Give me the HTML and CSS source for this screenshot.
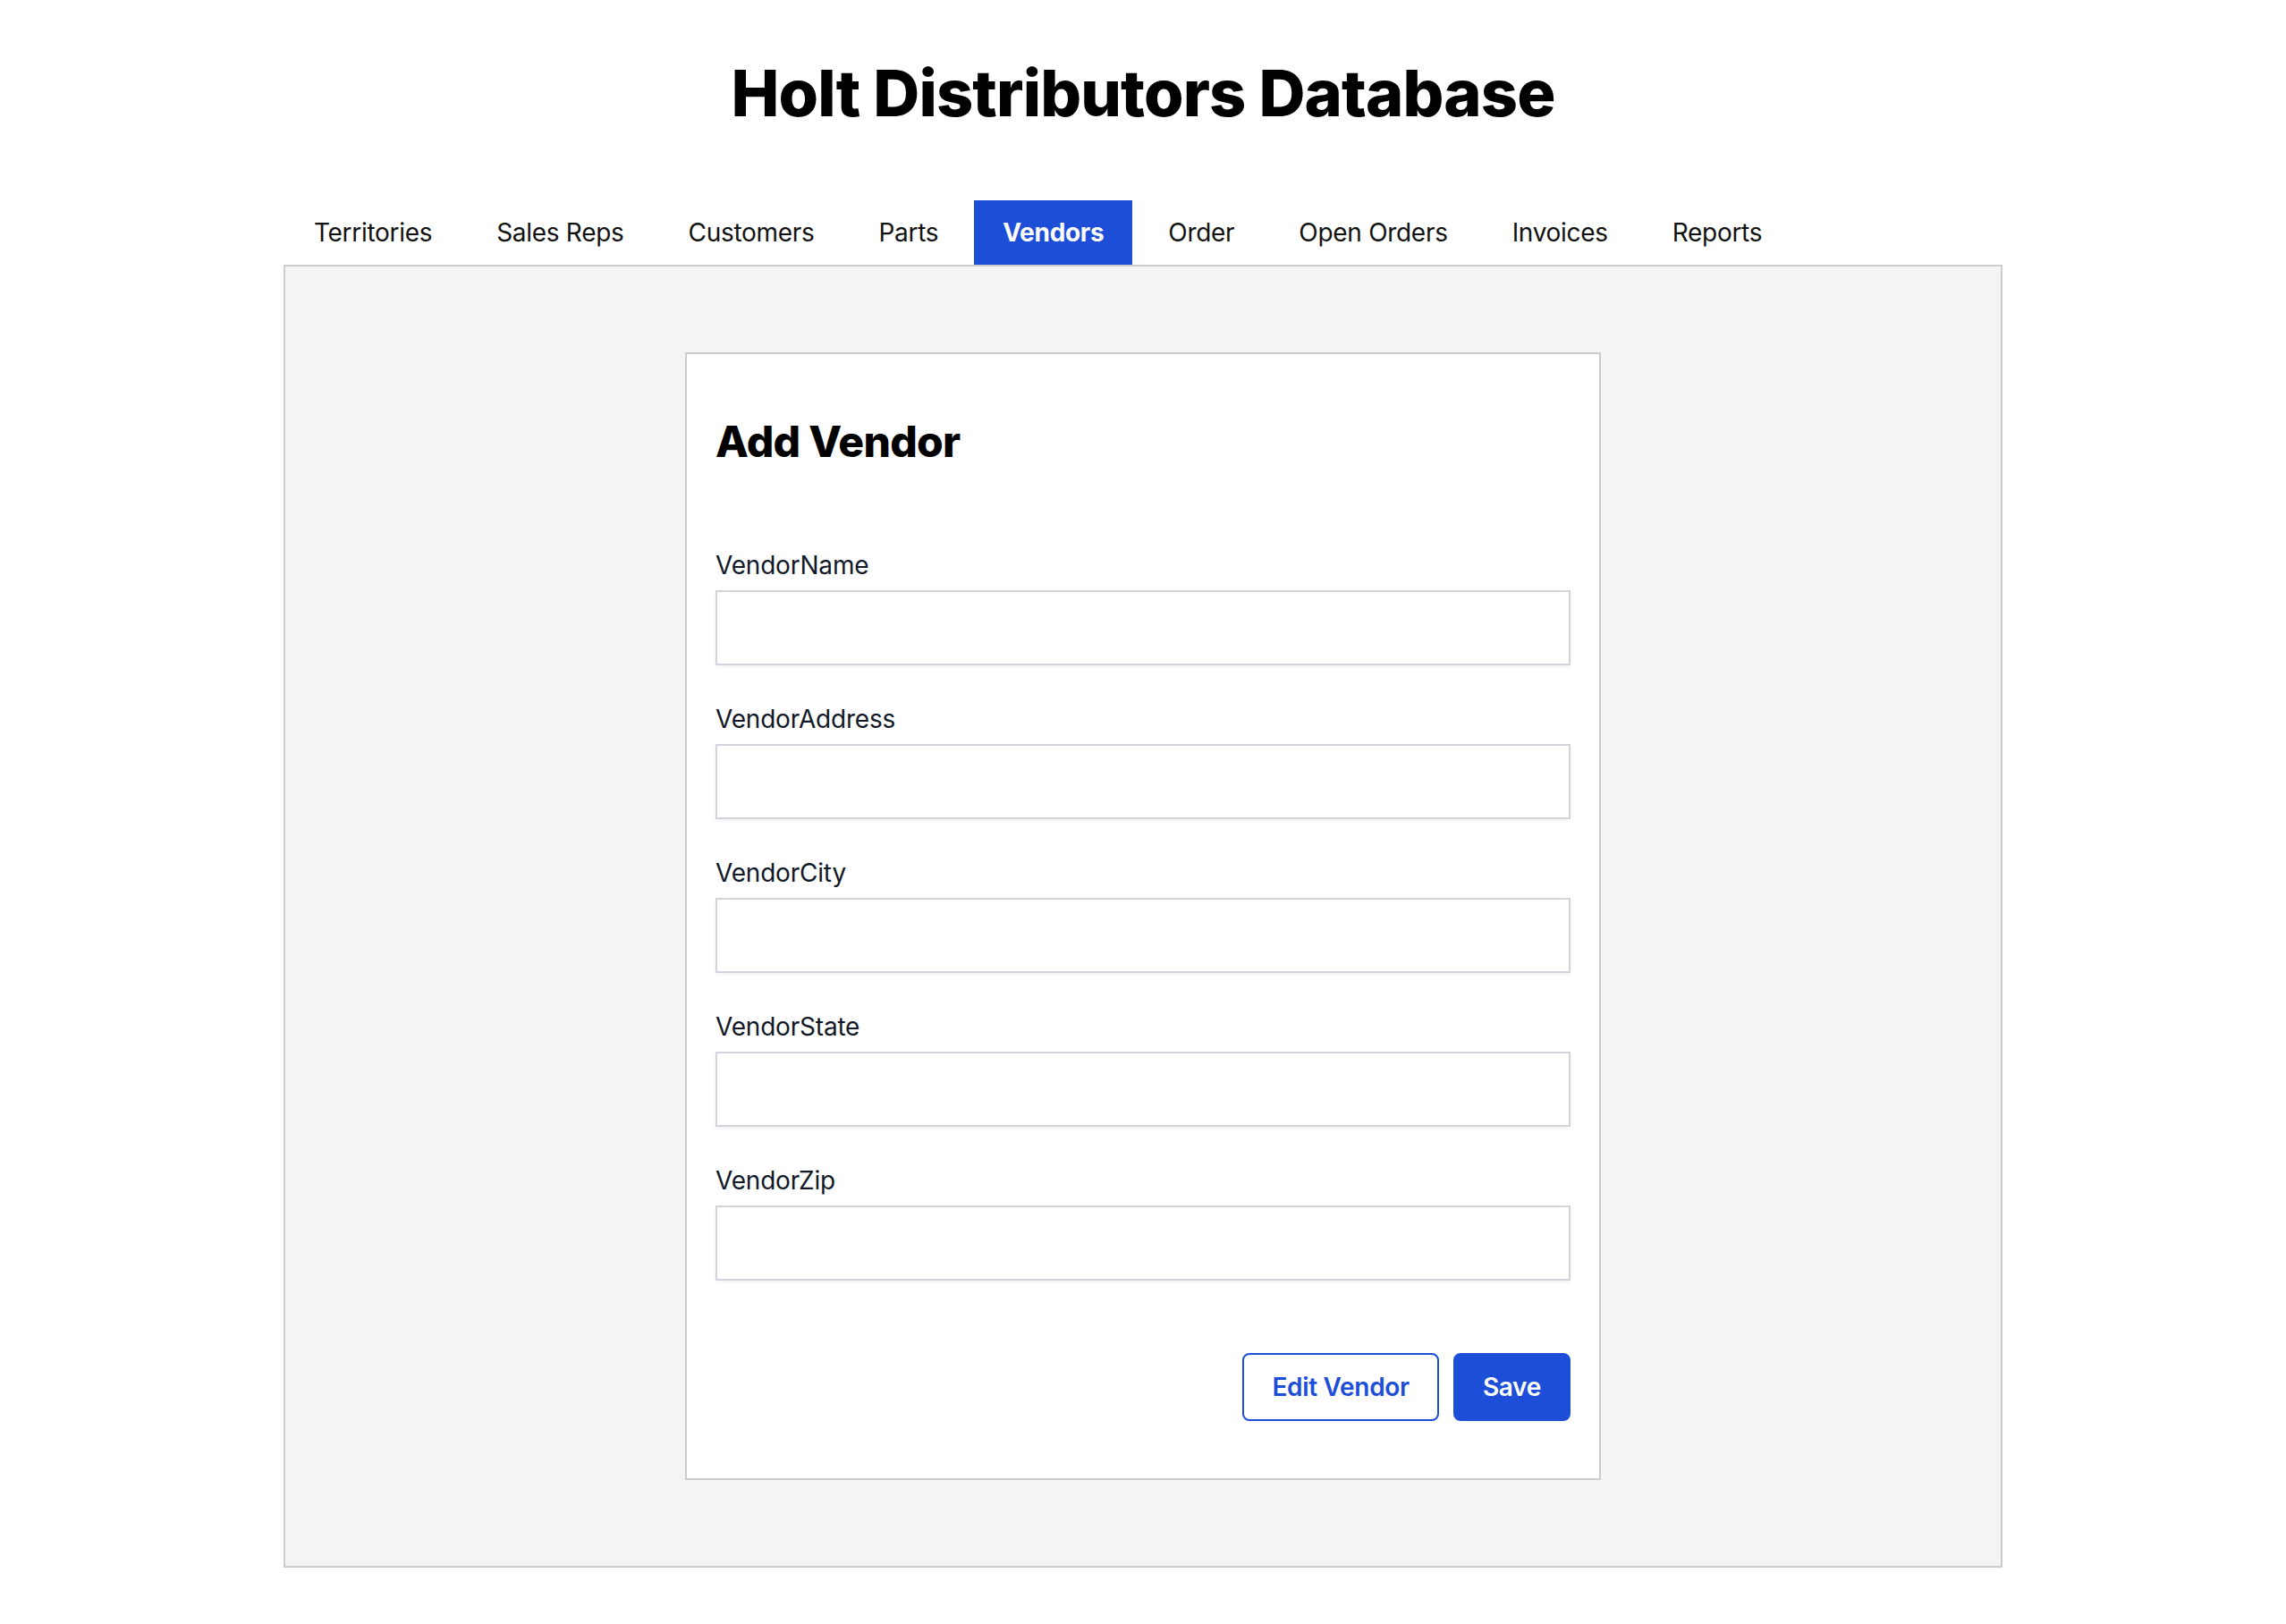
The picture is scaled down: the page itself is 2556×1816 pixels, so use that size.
FILE: index.html
```html
<!DOCTYPE html>
<html lang="en">
<head>
<meta charset="utf-8">
<title>Holt Distributors Database</title>
<link rel="stylesheet" href="styles.css">
</head>
<body>
  <h1 class="title">Holt Distributors Database</h1>
  <div class="wrap">
    <nav class="tabs">
      <a class="tab">Territories</a>
      <a class="tab">Sales Reps</a>
      <a class="tab">Customers</a>
      <a class="tab">Parts</a>
      <a class="tab active">Vendors</a>
      <a class="tab">Order</a>
      <a class="tab">Open Orders</a>
      <a class="tab">Invoices</a>
      <a class="tab">Reports</a>
    </nav>
    <main class="panel">
      <form class="card">
        <h2 class="card-title">Add Vendor</h2>
        <div class="field">
          <label class="label">VendorName</label>
          <input class="input" type="text">
        </div>
        <div class="field">
          <label class="label">VendorAddress</label>
          <input class="input" type="text">
        </div>
        <div class="field">
          <label class="label">VendorCity</label>
          <input class="input" type="text">
        </div>
        <div class="field">
          <label class="label">VendorState</label>
          <input class="input" type="text">
        </div>
        <div class="field">
          <label class="label">VendorZip</label>
          <input class="input" type="text">
        </div>
        <div class="actions">
          <button type="button" class="btn btn-outline">Edit Vendor</button>
          <button type="button" class="btn btn-primary">Save</button>
        </div>
      </form>
    </main>
  </div>
</body>
</html>
```

FILE: styles.css
```css
* { box-sizing: border-box; }
html, body { margin: 0; padding: 0; background: #ffffff; }
body {
  font-family: Inter, "Liberation Sans", Arial, sans-serif;
  color: #000;
}
.title {
  margin: 64px 0 64px;
  text-align: center;
  font-size: 72px;
  line-height: 80px;
  font-weight: 800;
  letter-spacing: -0.012em;
  color: #000;
}
.wrap {
  width: 1922px;
  margin: 0 auto;
  padding-top: 16px;
}
.tabs {
  display: flex;
  gap: 8px;
  padding-left: 2px;
}
.tab {
  display: block;
  padding: 16px 32px;
  font-size: 28px;
  line-height: 40px;
  letter-spacing: -0.3px;
  color: #111;
  cursor: pointer;
}
.tab.active {
  background: #1d4ed8;
  color: #fff;
  font-weight: 700;
}
.panel {
  background: #f3f4f6;
  border: 2px solid #cccccc;
  padding: 96px 0;
  display: flex;
  justify-content: center;
}
.card {
  width: 1024px;
  background: #fff;
  border: 2px solid #cccccc;
  padding: 66px 32px 64px;
  margin: 0;
}
.card-title {
  margin: 0 0 86px;
  font-size: 48px;
  line-height: 64px;
  font-weight: 800;
  letter-spacing: -0.015em;
}
.field {
  margin-bottom: 40px;
  display: flex;
  flex-direction: column;
}
.label {
  font-size: 28px;
  line-height: 40px;
  letter-spacing: -0.2px;
  color: #111827;
  margin-bottom: 8px;
}
.input {
  display: block;
  width: 100%;
  height: 84px;
  border: 2px solid #d1d5db;
  background: #fff;
  box-shadow: 0 2px 4px rgba(0,0,0,0.05);
  font-family: inherit;
  font-size: 28px;
  padding: 16px 24px;
  border-radius: 0;
}
.actions {
  display: flex;
  justify-content: flex-end;
  gap: 16px;
  margin-top: 81px;
}
.btn {
  font-family: inherit;
  font-size: 28px;
  line-height: 40px;
  font-weight: 600;
  letter-spacing: -0.3px;
  padding: 16px 31px;
  border-radius: 8px;
  border: 2px solid #1d4ed8;
  cursor: pointer;
}
.btn-outline {
  background: #fff;
  color: #1d4ed8;
}
.btn-primary {
  background: #1d4ed8;
  color: #fff;
}
```
